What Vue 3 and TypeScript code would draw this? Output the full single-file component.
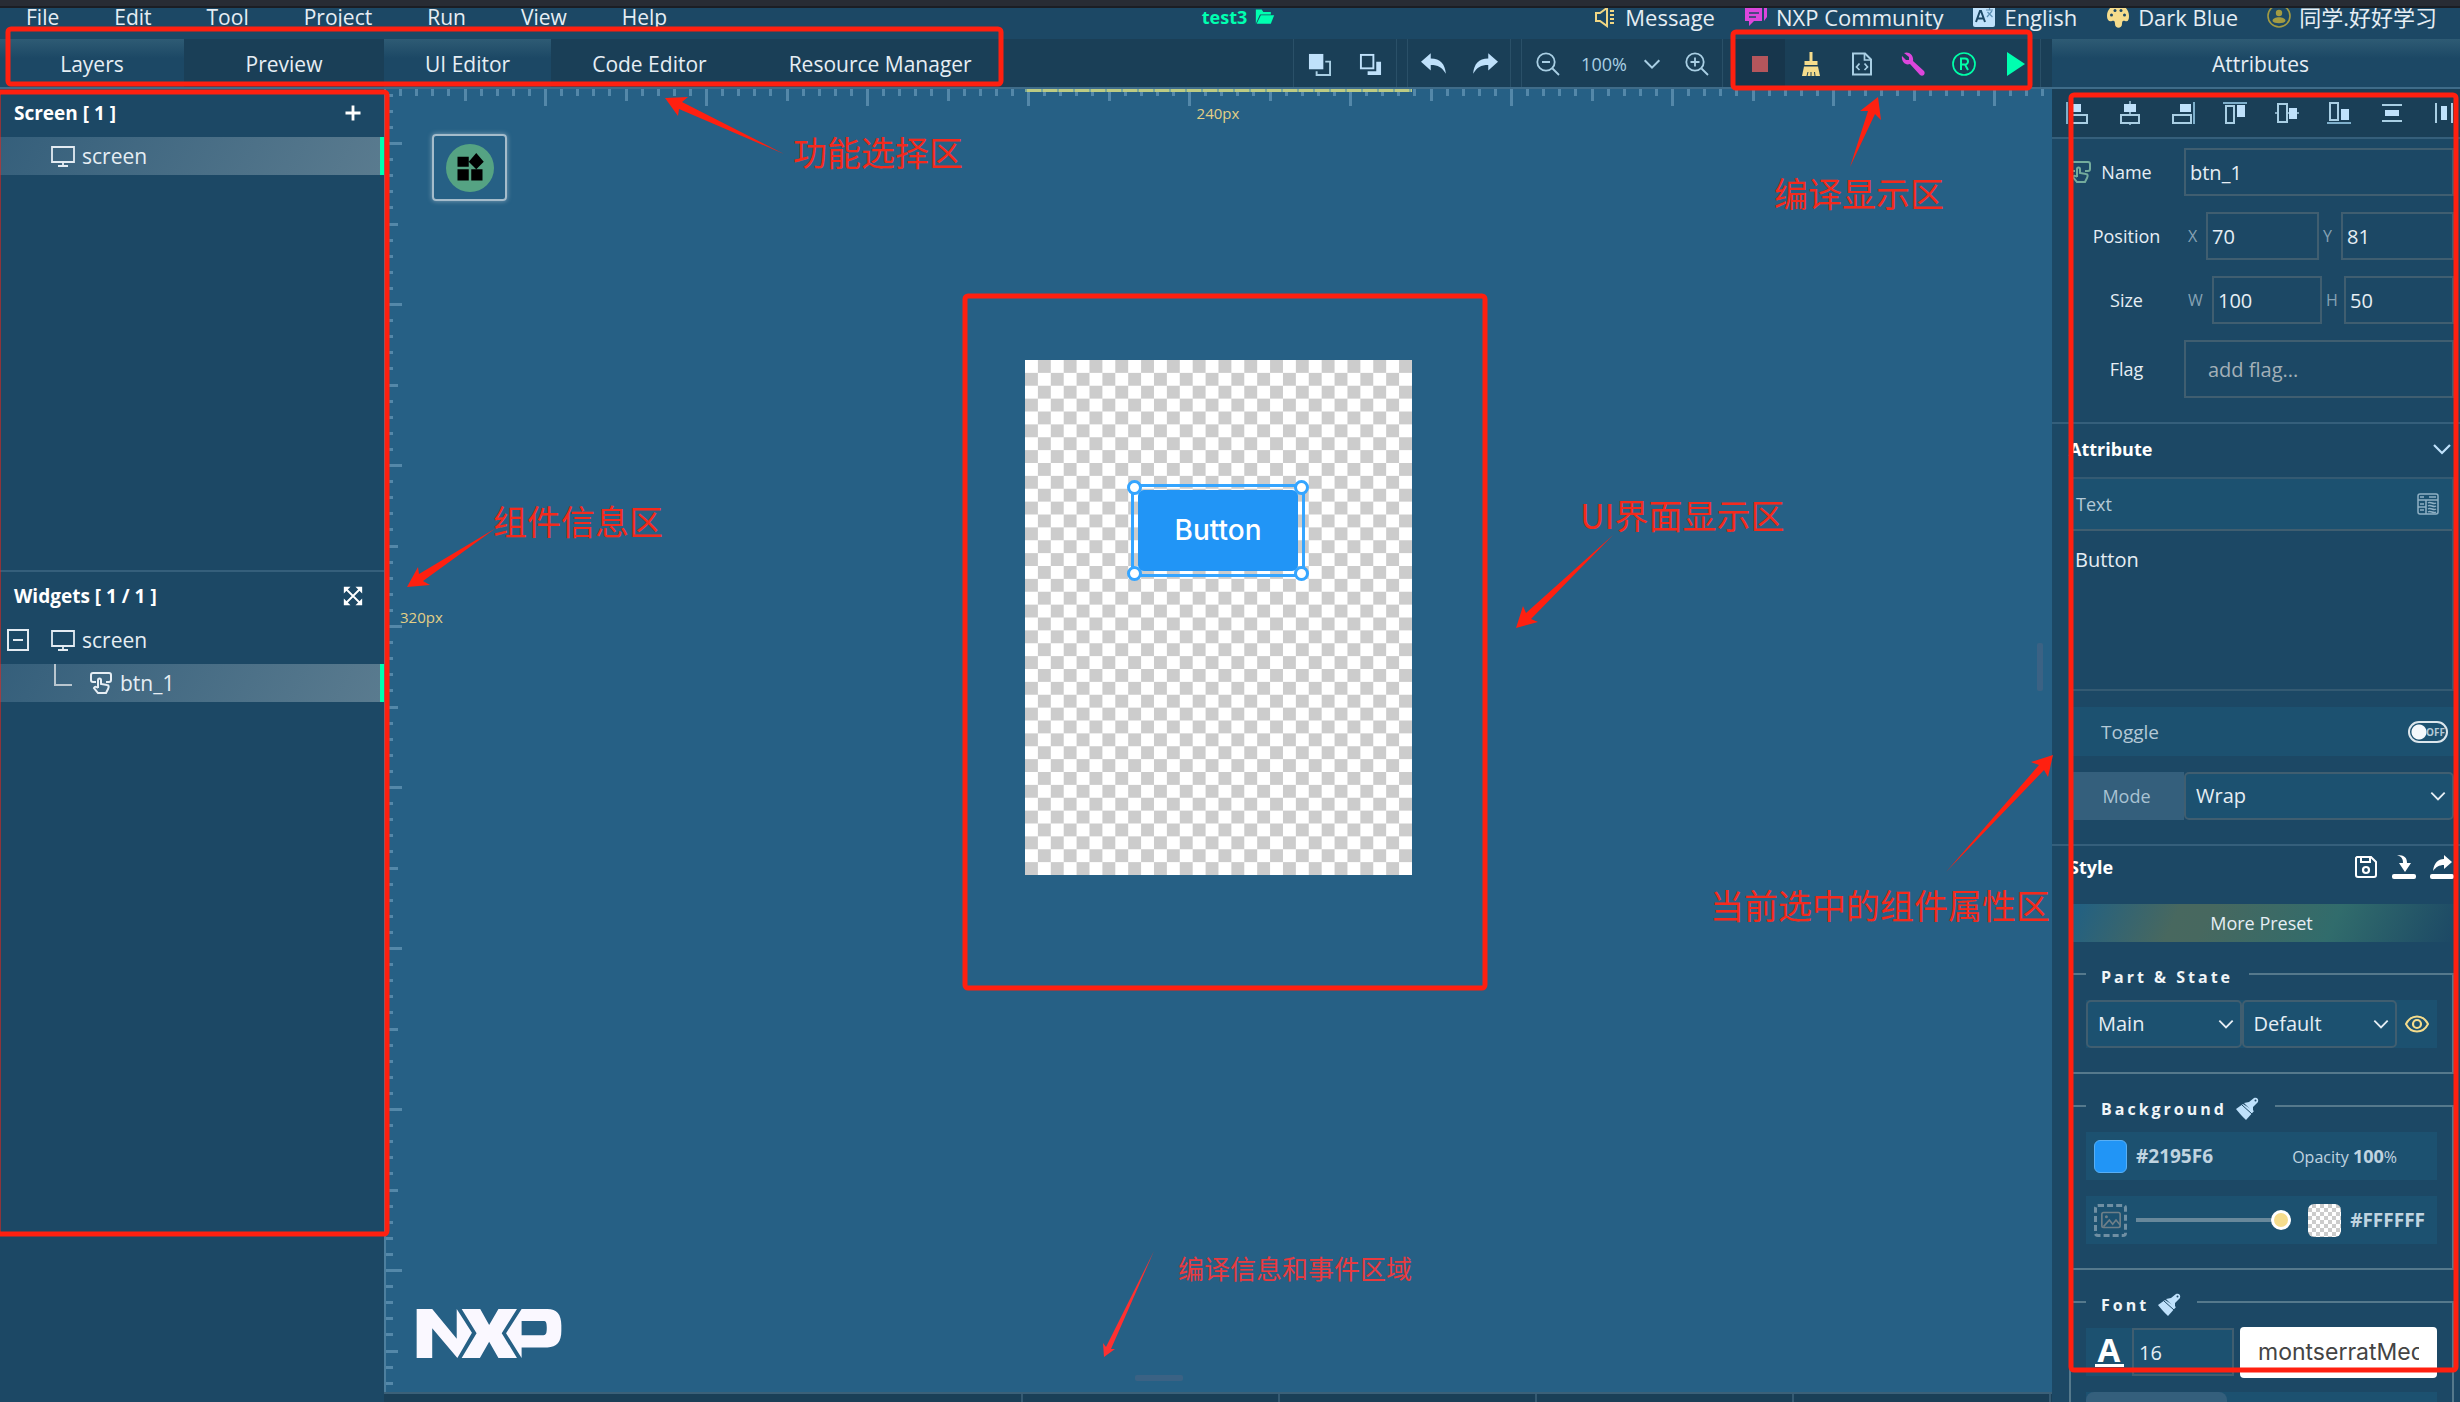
<script setup lang="ts">
import { h, ref } from 'vue'

const glyphs: Record<string, string> = {
  speaker: '<path d="M3 8h4l7-5v18l-7-5H3z" fill="none" stroke="#f0d684" stroke-width="2"/><path d="M17 6h4M17 10h4M17 14h4M17 18h4" stroke="#f0d684" stroke-width="2"/>',
  chat: '<path d="M1 3h17v13h-8l-5 5v-5H1z" fill="#dc46dc"/><path d="M20 2h3v10l-3 4z" fill="#dc46dc"/><path d="M5 8h10M5 12h7" stroke="#1c4865" stroke-width="1.6"/>',
  lang: '<rect x="1" y="1" width="22" height="21" rx="2" fill="#bfe1fb"/><path d="M4 17l4-11h1l4 11M5.500 13.500h6" fill="none" stroke="#1c4865" stroke-width="2"/><path d="M14 5h7M17.500 3v2M15 12l5-6M15.500 7l5 5" stroke="#5c90b4" stroke-width="1.200"/>',
  palette: '<path d="M12 0C5 0 1 5 1 11c0 4 2 6 5 5 2-1 3 0 3 3 0 5 7 5 7 0 0-3 1-4 3-3 3 1 4-1 4-5 0-6-4-11-11-11z" fill="#f5dc8c"/><circle cx="5.500" cy="10" r="1.500" fill="#1c4865"/><circle cx="9" cy="5.500" r="1.500" fill="#1c4865"/><circle cx="15" cy="5.500" r="1.500" fill="#1c4865"/><circle cx="18.500" cy="10" r="1.500" fill="#1c4865"/>',
  user: '<circle cx="12" cy="11" r="11" fill="none" stroke="#a39b42" stroke-width="1.600"/><circle cx="12" cy="8" r="3.200" fill="#a39b42"/><path d="M5.500 16c0-5 13-5 13 0-1 3-12 3-13 0z" fill="#a39b42"/>',
  folder: '<path d="M1 20V3h7l2 3h9v3H6z" fill="#00ffb0"/><path d="M7 10h16l-4 10H2z" fill="#00ffb0"/>',
  front: '<rect x="1" y="1" width="15" height="16" fill="#bfe1fb"/><path d="M18 9h5v14H9v-4" fill="none" stroke="#a9cfe4" stroke-width="2"/>',
  back: '<rect x="2" y="2" width="13" height="14" fill="none" stroke="#bfe1fb" stroke-width="2"/><path d="M18 9h5v14H9v-4h9z" fill="#bfe1fb"/>',
  undo: '<path d="M9 2v5c9 0 13 5 14 14-4-6-7-8-14-8v5L0 10z" fill="#bfe1fb"/>',
  redo: '<path d="M15 2v5C6 7 2 12 1 21c4-6 7-8 14-8v5l9-8z" fill="#bfe1fb"/>',
  zoomOut: '<circle cx="10" cy="10" r="8.700" fill="none" stroke="#a9cfe4" stroke-width="1.800"/><path d="M6 10h8M16.500 16.500L23 23" stroke="#a9cfe4" stroke-width="1.800"/>',
  zoomIn: '<circle cx="10" cy="10" r="8.700" fill="none" stroke="#a9cfe4" stroke-width="1.800"/><path d="M5.500 10h9M10 5.500v9M16.500 16.500L23 23" stroke="#a9cfe4" stroke-width="1.800"/>',
  chevron: '<path d="M4 8l8 8 8-8" fill="none" stroke="currentColor" stroke-width="2.200"/>',
  stop: '<rect x="4" y="4" width="16" height="16" fill="#b5565c"/>',
  broom: '<path d="M10.500 0h3v9h5v4h-13V9h5z" fill="#f5dc8c"/><path d="M5 14.500h14l2 9.500H3z" fill="#f5dc8c"/><path d="M8 24l1-4M12 24v-4M16 24l-.5-4" stroke="#1a3f57" stroke-width="1"/>',
  code: '<path d="M3 1.500h12l6 6v15H3z" fill="none" stroke="#a9cfe4" stroke-width="2"/><path d="M14.500 2v6H21M9.500 11.500L6.500 15l3 3M14.500 11.500l3 3.500-3 3" fill="none" stroke="#a9cfe4" stroke-width="1.700"/>',
  wrench: '<path d="M3 1l5 4v3H5L1 4c-1 5 3 10 8 8l10 11c3 2 6-1 4-4L12 9c1-6-4-10-9-8z" fill="#dc46dc"/>',
  registered: '<circle cx="12" cy="12" r="11" fill="none" stroke="#00ffa8" stroke-width="1.700"/><path d="M9 18V6.500h4a3 3 0 0 1 0 6H9M13 12.500l3 5.500" fill="none" stroke="#00ffa8" stroke-width="2"/>',
  play: '<path d="M4 0l18 12L4 24z" fill="#00ffb0"/>',
  plus: '<path d="M12 3v18M3 12h18" stroke="#fff" stroke-width="3.400"/>',
  expand: '<path d="M3 3l18 18M21 3L3 21" stroke="#fff" stroke-width="2.200"/><path d="M1 1h8L1 9zM23 1v8l-8-8zM1 23v-8l8 8zM23 23h-8l8-8z" fill="#fff"/>',
  monitor: '<path d="M1 3h22v15H1zM12 18v3M7 22h10" fill="none" stroke="#e3ebf2" stroke-width="1.800"/>',
  collapse: '<rect x="2" y="2" width="20" height="20" fill="none" stroke="#e3ebf2" stroke-width="2"/><path d="M7 12h10" stroke="#e3ebf2" stroke-width="2"/>',
  tap: '<path d="M7 11H4a2 2 0 0 1-2-2V4a2 2 0 0 1 2-2h16a2 2 0 0 1 2 2v5a2 2 0 0 1-2 2h-3" fill="none" stroke="currentColor" stroke-width="2"/><path d="M9 17V9c0-2 3-2 3 0v4l6 1c2 0 2 2 1 4l-2 4H9l-4-5c1-2 3-1 4 0" fill="none" stroke="currentColor" stroke-width="2"/>',
  left: '<path d="M1 1v22" stroke="#7fb0cc" stroke-width="2"/><rect x="4" y="3" width="11" height="8" fill="#bfe1fb"/><rect x="4" y="14" width="17" height="8" fill="none" stroke="#a9cfe4" stroke-width="2"/>',
  center: '<path d="M12 0v24" stroke="#a9cfe4" stroke-width="1.500"/><rect x="6" y="3" width="12" height="8" fill="#bfe1fb"/><rect x="3" y="14" width="18" height="8" fill="#1a3f57" stroke="#a9cfe4" stroke-width="2"/>',
  right: '<path d="M23 1v22" stroke="#7fb0cc" stroke-width="2"/><rect x="9" y="3" width="11" height="8" fill="#bfe1fb"/><rect x="2" y="14" width="18" height="8" fill="none" stroke="#a9cfe4" stroke-width="2"/>',
  top: '<path d="M0 2h24" stroke="#7fb0cc" stroke-width="2"/><rect x="14" y="4" width="8" height="12" fill="#bfe1fb"/><rect x="3" y="5" width="8" height="17" fill="none" stroke="#a9cfe4" stroke-width="2"/>',
  middle: '<path d="M0 12h24" stroke="#a9cfe4" stroke-width="1.500"/><rect x="14" y="7" width="8" height="11" fill="#bfe1fb"/><rect x="3" y="3" width="9" height="18" fill="#1a3f57" stroke="#a9cfe4" stroke-width="2"/>',
  bottom: '<path d="M0 22h24" stroke="#7fb0cc" stroke-width="2"/><rect x="14" y="8" width="8" height="11" fill="#bfe1fb"/><rect x="3" y="2" width="8" height="17" fill="none" stroke="#a9cfe4" stroke-width="2"/>',
  spreadV: '<path d="M2 4h20M2 20h20" stroke="#a9cfe4" stroke-width="2"/><rect x="5" y="9" width="14" height="6" fill="#bfe1fb"/>',
  spreadH: '<path d="M4 2v20M20 2v20" stroke="#a9cfe4" stroke-width="2"/><rect x="9" y="5" width="6" height="14" fill="#bfe1fb"/>',
  sheet: '<rect x="2" y="2" width="20" height="20" rx="2" fill="none" stroke="#8fb0c4" stroke-width="1.500"/><path d="M2 8h20M2 15h8M10 8v14M13 5h7M12 11c3-2 5 2 8 0M12 14c3-2 5 2 8 0M12 17c3-2 5 2 8 0M12 20c3-2 5 2 8 0M4 5h4M4 12h4M4 18h4" fill="none" stroke="#8fb0c4" stroke-width="1.500"/>',
  save: '<path d="M3 2h14l5 5v13a2 2 0 0 1-2 2H4a2 2 0 0 1-2-2V3z" fill="none" stroke="#fff" stroke-width="2"/><path d="M7 3v4h9V3" fill="none" stroke="#fff" stroke-width="2"/><circle cx="12" cy="15" r="3" fill="none" stroke="#fff" stroke-width="2.200"/>',
  import: '<path d="M5 0c8 0 10 3 10 8h4l-6 9-6-9h4c0-4-1-6-6-8z" fill="#fff"/><rect x="0" y="19" width="24" height="5" rx="2" fill="#fff"/>',
  export: '<path d="M3 16C4 8 8 4 14 4V0l8 7-8 7v-4c-5 0-8 2-11 6z" fill="#fff"/><rect x="0" y="19" width="24" height="5" rx="2" fill="#fff"/>',
  eye: '<path d="M1 12C6 2 18 2 23 12 18 22 6 22 1 12z" fill="none" stroke="#f5dc8c" stroke-width="2"/><circle cx="12" cy="12" r="4" fill="none" stroke="#f5dc8c" stroke-width="2.200"/>',
  brush: '<path d="M8 7L1 12c3 4 6 7 10 11l8-9z" fill="#bfe1fb"/><path d="M9 6l5-1 5-4c3-1 5 1 4 4l-5 5v5z" fill="#bfe1fb"/><path d="M7 8l10 9" stroke="#1c4865" stroke-width="1"/><circle cx="20.500" cy="3.500" r="1" fill="#1c4865"/>',
  picture: '<rect x="1" y="3" width="22" height="18" rx="2" fill="none" stroke="#6e7f88" stroke-width="2"/><circle cx="6.500" cy="8" r="1.800" fill="#6e7f88"/><path d="M3 20l7-8 4 5 4-5 5 6" fill="none" stroke="#6e7f88" stroke-width="2"/>',
  widgets: '<path d="M2 3h9v8H2zM2 13h9v9H2zM13 13h9v9h-9zM17 0l6 7-6 6-6-6z" fill="#000"/>',
}

const Glyph = (props: { name: string; size?: number }) =>
  h('svg', {
    viewBox: '0 0 24 24',
    width: props.size ?? 24,
    height: props.size ?? 24,
    'aria-hidden': 'true',
    innerHTML: glyphs[props.name],
  })
Glyph.props = ['name', 'size']

const menus = ['File', 'Edit', 'Tool', 'Project', 'Run', 'View', 'Help']
const account = [
  { icon: 'speaker', label: 'Message' },
  { icon: 'chat', label: 'NXP Community' },
  { icon: 'lang', label: 'English' },
  { icon: 'palette', label: 'Dark Blue' },
  { icon: 'user', label: '同学.好好学习' },
]
const editors = ['UI Editor', 'Code Editor', 'Resource Manager']
const buildTools = ['stop', 'broom', 'code', 'wrench', 'registered', 'play']
const aligns = ['left', 'center', 'right', 'top', 'middle', 'bottom', 'spreadV', 'spreadH']

const name = ref('btn_1')
const posX = ref('70')
const posY = ref('81')
const width = ref('100')
const height = ref('50')
const caption = ref('Button')
const toggle = ref(false)
const opacity = ref(100)
const fontSize = ref('16')
const fontName = ref('montserratMedium')

// Ruler: ten divisions to every 161 px, the fifth and tenth are longer
const ticks = (count: number, origin: number) =>
  Array.from({ length: count }, (_, i) => ({
    at: Math.round(origin + (i * 161) / 10),
    rank: i % 10 === 0 ? 'major' : i % 5 === 0 ? 'mid' : 'minor',
  }))
const tickLen = { major: 17, mid: 12, minor: 7 } as Record<string, number>
const across = ticks(104, -1)
const down = ticks(91, -108)

// Callout arrow: slim wedge that widens from its tail into a barbed head
function arrow(tx: number, ty: number, sx: number, sy: number, scale = 1) {
  const len = Math.hypot(sx - tx, sy - ty)
  const ux = (sx - tx) / len
  const uy = (sy - ty) / len
  const p = (a: number, b: number) =>
    `${Math.round(tx + (ux * a - uy * b) * scale)},${Math.round(ty + (uy * a + ux * b) * scale)}`
  return [p(0, 0), p(20, 11), p(17, 4), `${sx},${sy}`, p(17, -4), p(20, -11)].join(' ')
}
const arrows = [
  arrow(665, 98, 784, 154),
  arrow(407, 587, 496, 528),
  arrow(1878, 97, 1850, 167),
  arrow(1516, 628, 1613, 535),
  arrow(2053, 755, 1946, 872),
]
const smallArrow = arrow(1104, 1357, 1154, 1251, 0.6)
const frames = [
  { x: 8, y: 29, w: 993, h: 55 },
  { x: -2, y: 92, w: 389, h: 1142 },
  { x: 1733, y: 32, w: 297, h: 56 },
  { x: 2071, y: 95, w: 385, h: 1275 },
  { x: 965, y: 296, w: 520, h: 692 },
]
const notes = [
  { text: '功能选择区', x: 793, y: 127 },
  { text: '编译显示区', x: 1774, y: 168 },
  { text: '组件信息区', x: 493, y: 496 },
  { text: 'UI界面显示区', x: 1580, y: 490 },
  { text: '当前选中的组件属性区', x: 1710, y: 880 },
]
</script>

<template>
  <div class="app">
    <div class="titlebar"></div>
    <header class="menubar">
      <nav class="menus">
        <button v-for="m in menus" :key="m" type="button">{{ m }}</button>
      </nav>
      <button class="project" type="button">test3 <Glyph name="folder" :size="20" /></button>
      <div class="account">
        <button v-for="a in account" :key="a.label" type="button">
          <Glyph :name="a.icon" />{{ a.label }}
        </button>
      </div>
    </header>

    <div class="body">
      <aside class="left">
        <div class="head tabs">
          <button class="tab wide active" type="button">Layers</button>
          <button class="tab preview" type="button">Preview</button>
        </div>
        <section class="screens">
          <h2>Screen [ 1 ]<button type="button" aria-label="Add screen"><Glyph name="plus" :size="20" /></button></h2>
          <div class="row selected indent"><Glyph name="monitor" /><span>screen</span></div>
        </section>
        <section class="widgets">
          <h2>Widgets [ 1 / 1 ]<button type="button" aria-label="Expand"><Glyph name="expand" :size="20" /></button></h2>
          <div class="row root"><Glyph name="collapse" /><Glyph class="mon" name="monitor" /><span>screen</span></div>
          <div class="row selected child"><i class="branch"></i><Glyph name="tap" /><span>btn_1</span></div>
        </section>
      </aside>

      <main class="center">
        <div class="head tabs">
          <button v-for="(e, i) in editors" :key="e" type="button" class="tab" :class="{ active: i === 0 }">{{ e }}</button>
          <div class="tools">
            <div class="group">
              <button type="button" aria-label="Bring to front"><Glyph name="front" :size="23" /></button>
              <button type="button" aria-label="Send to back"><Glyph name="back" :size="23" /></button>
            </div>
            <div class="group">
              <button type="button" aria-label="Undo"><Glyph name="undo" :size="26" /></button>
              <button type="button" aria-label="Redo"><Glyph name="redo" :size="26" /></button>
            </div>
            <div class="group zoom">
              <button type="button" aria-label="Zoom out"><Glyph name="zoomOut" /></button>
              <button class="level" type="button">100%<Glyph name="chevron" :size="22" /></button>
              <button type="button" aria-label="Zoom in"><Glyph name="zoomIn" /></button>
            </div>
            <div class="group">
              <button v-for="b in buildTools" :key="b" type="button" :class="b" :aria-label="b"><Glyph :name="b" /></button>
            </div>
          </div>
        </div>

        <div class="stage">
          <svg class="ruler-x" aria-hidden="true">
            <rect v-for="t in across" :key="t.at" :x="t.at" y="0" width="3" :height="tickLen[t.rank]" />
          </svg>
          <svg class="ruler-y" aria-hidden="true">
            <rect v-for="t in down" :key="t.at" x="0" :y="t.at" :width="tickLen[t.rank]" height="3" />
          </svg>
          <div class="range"></div>
          <span class="px-x">240px</span>
          <span class="px-y">320px</span>
          <button class="palette" type="button" aria-label="Widgets"><span><Glyph name="widgets" :size="30" /></span></button>
          <div class="screen">
            <div class="selection">
              <div class="btn">Button</div>
              <i class="h nw"></i><i class="h ne"></i><i class="h sw"></i><i class="h se"></i>
            </div>
          </div>
          <svg class="logo" viewBox="49 57 437 148" width="146" height="49" role="img" aria-label="NXP">
            <g fill="#faf8ff">
              <path d="M49 57h47l74 90V57l46 72-44 76-76-90v90H49z" />
              <path d="M185 57h56l27 48 28-48h56l-46 73 46 75h-56l-28-49-28 49h-55l45-75z" />
              <path d="M366 57h78c28 0 42 16 42 50v16c0 34-14 50-42 50h-78v32l-47-75zM366 93v43h66c8 0 10-6 10-22s-2-21-10-21z" fill-rule="evenodd" />
            </g>
          </svg>
          <i class="grip-x"></i>
          <i class="grip-y"></i>
        </div>
        <footer class="dock"><i></i><i></i><i></i><i></i><i></i></footer>
      </main>

      <aside class="panel">
        <div class="head panel-title">Attributes</div>
        <div class="aligns">
          <button v-for="a in aligns" :key="a" type="button" :aria-label="a"><Glyph :name="a" /></button>
        </div>

        <section class="form">
          <div class="field">
            <Glyph class="kind" name="tap" />
            <label for="f-name">Name</label>
            <input id="f-name" v-model="name" />
          </div>
          <div class="field">
            <span class="label">Position</span>
            <label class="axis" for="f-x">X</label><input id="f-x" v-model="posX" />
            <label class="axis" for="f-y">Y</label><input id="f-y" v-model="posY" />
          </div>
          <div class="field">
            <span class="label">Size</span>
            <label class="axis w" for="f-w">W</label><input id="f-w" v-model="width" />
            <label class="axis" for="f-h">H</label><input id="f-h" v-model="height" />
          </div>
          <div class="field flag">
            <label for="f-flag">Flag</label>
            <input id="f-flag" placeholder="add flag..." />
          </div>
        </section>

        <section class="attribute">
          <h3>Attribute<Glyph name="chevron" /></h3>
          <div class="text-box">
            <label for="f-text">Text<Glyph name="sheet" /></label>
            <textarea id="f-text" v-model="caption"></textarea>
          </div>
          <label class="switch">Toggle<input v-model="toggle" type="checkbox" /><b>OFF</b></label>
          <div class="mode">
            <label for="f-mode">Mode</label>
            <div class="pick">
              <select id="f-mode"><option>Wrap</option></select><Glyph name="chevron" :size="20" />
            </div>
          </div>
        </section>

        <section class="style">
          <h3>Style
            <span>
              <button type="button" aria-label="Save"><Glyph name="save" /></button>
              <button type="button" aria-label="Import"><Glyph name="import" /></button>
              <button type="button" aria-label="Export"><Glyph name="export" /></button>
            </span>
          </h3>
          <button class="preset" type="button">More Preset</button>

          <fieldset>
            <legend>Part &amp; State</legend>
            <div class="line">
              <div class="pick"><select aria-label="Part"><option>Main</option></select><Glyph name="chevron" :size="20" /></div>
              <div class="pick"><select aria-label="State"><option>Default</option></select><Glyph name="chevron" :size="20" /></div>
              <button class="eye" type="button" aria-label="Show"><Glyph name="eye" /></button>
            </div>
          </fieldset>

          <fieldset>
            <legend>Background <Glyph name="brush" /></legend>
            <div class="line pad">
              <i class="swatch blue"></i><b>#2195F6</b>
              <span class="opacity">Opacity <b>100</b>%</span>
            </div>
            <div class="line pad">
              <span class="slot"><Glyph name="picture" :size="20" /></span>
              <input v-model="opacity" type="range" min="0" max="100" aria-label="Opacity" />
              <i class="swatch clear"></i><b>#FFFFFF</b>
            </div>
          </fieldset>

          <fieldset>
            <legend>Font <Glyph name="brush" /></legend>
            <div class="line font">
              <button class="colour" type="button"><span>A</span></button>
              <input v-model="fontSize" class="size" aria-label="Font size" />
              <input v-model="fontName" class="family" aria-label="Font family" />
            </div>
            <div class="line more"><i></i></div>
          </fieldset>
        </section>
      </aside>
    </div>

    <div class="callouts">
      <svg width="100%" height="100%" aria-hidden="true">
        <rect v-for="(f, i) in frames" :key="i" :x="f.x" :y="f.y" :width="f.w" :height="f.h" rx="3" fill="none" stroke="#ff2010" stroke-width="5" />
        <polygon v-for="a in arrows" :key="a" :points="a" fill="#ff2010" />
        <polygon :points="smallArrow" fill="#ff3030" />
      </svg>
      <span v-for="n in notes" :key="n.text" :style="{ left: n.x + 'px', top: n.y + 'px' }">{{ n.text }}</span>
      <span class="small">编译信息和事件区域</span>
    </div>
  </div>
</template>

<style>
body {
  margin: 0;
  background: #1c4865;
}
</style>

<style scoped>
* {
  box-sizing: border-box;
}
.app {
  position: relative;
  display: flex;
  flex-direction: column;
  height: 100vh;
  overflow: hidden;
  background: #1c4865;
  color: #e6eef4;
  font-family: "Open Sans", "Noto Sans CJK SC", sans-serif;
  font-size: 20px;
  line-height: 28px;
}
button,
input,
select,
textarea {
  margin: 0;
  padding: 0;
  border: 0;
  border-radius: 0;
  background: none;
  color: inherit;
  font: inherit;
  outline: 0;
}
svg {
  flex: none;
  display: block;
}
.titlebar {
  position: relative;
  z-index: 1;
  flex: none;
  height: 8px;
  background: #282c34;
  border-bottom: 2px solid #1b1e24;
}
.menubar {
  flex: none;
  display: flex;
  align-items: center;
  justify-content: space-between;
  height: 31px;
  padding: 0 23px 14px 26px;
  font-size: 21px;
  line-height: 18px;
}
.menubar button {
  height: 18px;
}
.menus {
  display: flex;
  flex: 1 1 0;
  gap: 55px;
}
.project {
  display: flex;
  align-items: center;
  gap: 8px;
  margin-left: 14px;
  color: #00ffb0;
  font-size: 18px;
  font-weight: 700;
}
.account {
  display: flex;
  flex: 1 1 0;
  justify-content: flex-end;
  gap: 29px;
  font-size: 22px;
}
.account button {
  display: flex;
  align-items: center;
  gap: 8px;
  white-space: nowrap;
}
.body {
  flex: 1;
  display: flex;
  min-height: 0;
}
.head {
  flex: none;
  height: 50px;
  border-bottom: 2px solid #3f6c89;
  background: #1a3f57;
  font-size: 21px;
}
.tabs {
  display: flex;
}
.tab {
  padding: 2px 41px 0;
  white-space: nowrap;
}
.tab.active {
  background: linear-gradient(#2e5b74, #1c4865 40%);
}
.wide {
  flex: 0 0 184px;
}
.preview {
  flex: 1;
}

.left {
  flex: 0 0 384px;
  display: flex;
  flex-direction: column;
}
h2,
h3 {
  display: flex;
  align-items: center;
  justify-content: space-between;
  margin: 0;
  font-size: 18px;
  font-weight: 700;
  color: #fff;
}
h2 {
  height: 48px;
  padding: 0 21px 0 14px;
  font-size: 19px;
}
.screens {
  flex: 0 0 483px;
  border-bottom: 2px solid #355f7b;
}
.row {
  display: flex;
  align-items: center;
  gap: 7px;
  height: 38px;
  font-size: 21px;
}
.selected {
  border-right: 4px solid #00ffb0;
  background: linear-gradient(120deg, #355f7b, #5a7b8f);
}
.indent {
  padding-left: 51px;
}
.root {
  height: 44px;
  padding: 0 0 4px 6px;
}
.mon {
  margin-left: 14px;
}
.child {
  padding-left: 54px;
}
.branch {
  align-self: flex-start;
  width: 18px;
  height: 22px;
  margin-right: 10px;
  border: solid #b9c6cf;
  border-width: 0 0 2px 2px;
}

.center {
  flex: 1;
  display: flex;
  flex-direction: column;
  min-width: 0;
}
.tools {
  display: flex;
  gap: 10px;
  margin-left: auto;
  padding-right: 11px;
}
.group {
  display: flex;
  align-items: stretch;
  border: solid #2a5068;
  border-width: 0 1px;
}
.group button {
  display: flex;
  align-items: center;
  justify-content: center;
  width: 51px;
  padding-top: 2px;
  color: #a9cfe4;
}
.group .level {
  width: 98px;
  gap: 14px;
  font-size: 18px;
}
.group .stop {
  background: #17364c;
}
.stage {
  position: relative;
  flex: 1;
  display: flex;
  justify-content: center;
  align-items: flex-start;
  padding-top: 271px;
  background: #266085;
  overflow: hidden;
}
.ruler-x,
.ruler-y {
  position: absolute;
  left: 0;
  top: 0;
  fill: #5488a9;
}
.ruler-x {
  width: 100%;
  height: 17px;
}
.ruler-y {
  width: 18px;
  height: 100%;
  border-left: 2px solid #4d7f9e;
}
.range {
  position: absolute;
  top: 0;
  left: calc(50% - 193px);
  width: 387px;
  height: 3px;
  background: repeating-linear-gradient(90deg, #7ea994 0 2px, #bccb83 2px 16px);
}
.px-x,
.px-y {
  position: absolute;
  color: #e3cf85;
  font-size: 15px;
  line-height: 20px;
}
.px-x {
  top: 14px;
  left: 50%;
  transform: translateX(-50%);
}
.px-y {
  top: 518px;
  left: 16px;
}
.palette {
  position: absolute;
  left: 48px;
  top: 45px;
  display: flex;
  align-items: center;
  justify-content: center;
  width: 75px;
  height: 67px;
  border: 2px solid #a5bccb;
  border-radius: 4px;
  box-shadow: 0 0 5px #7fa0b6;
}
.palette span {
  display: flex;
  align-items: center;
  justify-content: center;
  width: 48px;
  height: 48px;
  border-radius: 50%;
  background: #55a383;
}
.screen {
  display: flex;
  align-items: flex-start;
  justify-content: center;
  width: 387px;
  height: 515px;
  padding-top: 124px;
  background: conic-gradient(#ccc 25%, #fff 0 50%, #ccc 0 75%, #fff 0) 0 0 / calc(100% / 15) calc(100% / 20);
}
.selection {
  position: relative;
  width: 174px;
  height: 93px;
  padding: 3px 4px;
  border: 3px solid #35a5ff;
}
.btn {
  height: 81px;
  border-radius: 6px;
  background: #2195f6;
  color: #fff;
  font-family: Inter, sans-serif;
  font-size: 28px;
  font-weight: 500;
  line-height: 81px;
  text-align: center;
}
.h {
  position: absolute;
  width: 15px;
  height: 15px;
  border: 3px solid #35a5ff;
  border-radius: 50%;
  background: #fff;
}
.nw {
  left: -7px;
  top: -7px;
}
.ne {
  right: -7px;
  top: -7px;
}
.sw {
  left: -7px;
  bottom: -7px;
}
.se {
  right: -7px;
  bottom: -7px;
}
.logo {
  position: absolute;
  left: 32px;
  bottom: 34px;
}
.grip-x,
.grip-y {
  position: absolute;
  border-radius: 2px;
  background: #3b6284;
}
.grip-x {
  bottom: 11px;
  left: 45%;
  width: 48px;
  height: 6px;
}
.grip-y {
  top: 554px;
  right: 9px;
  width: 6px;
  height: 48px;
}
.dock {
  flex: none;
  display: flex;
  height: 10px;
  padding-left: 382px;
  border-top: 2px solid #3b6078;
  background: #1a3f57;
}
.dock i {
  width: 257px;
  border-right: 2px solid #355a72;
}

.panel {
  flex: 0 0 408px;
  overflow: hidden;
}
.panel-title {
  padding-left: 9px;
  background: linear-gradient(#2e5b74, #1c4865 40%);
  line-height: 50px;
  text-align: center;
}
.aligns {
  display: flex;
  justify-content: space-between;
  align-items: center;
  height: 50px;
  padding: 0 4px 0 14px;
  border-bottom: 2px solid #355f7b;
  background: #1a3f57;
}
.form {
  display: flex;
  flex-direction: column;
  gap: 16px;
  padding: 9px 6px 24px 17px;
  border-bottom: 2px solid #355f7b;
}
.field {
  position: relative;
  display: flex;
  align-items: center;
}
.field > label,
.label {
  flex: 0 0 115px;
  font-size: 18px;
  text-align: center;
}
.kind {
  position: absolute;
  left: -1px;
  color: #73ab9c;
}
.field .axis {
  flex: 0 0 22px;
  padding-left: 4px;
  color: #86a2b4;
  font-size: 16px;
  text-align: left;
}
.field .axis.w {
  flex-basis: 28px;
}
.field input {
  flex: 1 1 0;
  min-width: 0;
  height: 48px;
  padding: 0 4px;
  border: 2px solid #405e70;
}
.field.flag input {
  height: 58px;
  padding: 0 22px;
}
.flag input::placeholder {
  color: #a3b0b8;
  opacity: 1;
}
h3 {
  height: 48px;
}
.attribute {
  padding: 1px 6px 24px 17px;
  border-bottom: 2px solid #355f7b;
}
.attribute h3 {
  margin-bottom: 4px;
}
.attribute h3 svg {
  color: #bfe1fb;
}
.text-box {
  border: 2px solid #345a72;
}
.text-box label {
  display: flex;
  align-items: center;
  justify-content: space-between;
  height: 52px;
  padding: 0 12px 0 5px;
  border-bottom: 2px solid #405e70;
  background: #1c5170;
  color: #b4c9d6;
  font-size: 18px;
}
.text-box textarea {
  display: block;
  width: 100%;
  height: 158px;
  padding: 15px 4px;
  resize: none;
}
.switch {
  position: relative;
  display: flex;
  align-items: center;
  justify-content: space-between;
  height: 49px;
  margin: 16px 0;
  padding: 0 6px 0 32px;
  background: #1c5170;
  color: #b4c9d6;
  font-size: 19px;
}
.switch input {
  appearance: none;
  width: 40px;
  height: 22px;
  border: 2px solid #dce6ec;
  border-radius: 11px;
  background: radial-gradient(circle at 9px 9px, #f4f8fb 0 7px, transparent 8px);
}
.switch b {
  position: absolute;
  right: 9px;
  font-size: 10px;
  line-height: 12px;
}
.mode {
  display: flex;
}
.mode label {
  flex: 0 0 115px;
  background: #345f7c;
  color: #a9c3d3;
  font-size: 18px;
  line-height: 48px;
  text-align: center;
}
.pick {
  position: relative;
  flex: 1 1 0;
  min-width: 0;
}
.pick select {
  appearance: none;
  width: 100%;
  height: 48px;
  padding: 0 10px;
  border: 2px solid #405e70;
  border-radius: 5px;
  background: #1c5170;
}
.pick svg {
  position: absolute;
  right: 6px;
  top: 14px;
  pointer-events: none;
}
.style {
  padding: 0 6px 0 17px;
}
.style h3 {
  height: 42px;
}
.style h3 span {
  display: flex;
  gap: 14px;
}
.preset {
  display: block;
  width: 100%;
  height: 38px;
  margin: 16px 0 20px;
  background: linear-gradient(115deg, #1f6085, #48685f 28%, #47685f 36%, #316c6c 68%, #1c4865);
  font-size: 18px;
}
fieldset {
  min-width: 0;
  margin: 0 0 20px;
  padding: 14px 15px 24px;
  border: 2px solid #55798c;
  display: block;
}
legend {
  display: flex;
  align-items: center;
  gap: 8px;
  height: 24px;
  padding: 6px 16px 0 15px;
  color: #f0f5f8;
  font-size: 16px;
  font-weight: 700;
  letter-spacing: 3px;
  line-height: 18px;
}
.line {
  display: flex;
  align-items: center;
  height: 48px;
  background: #1c5170;
}
.line + .line {
  margin-top: 16px;
}
.eye {
  display: flex;
  justify-content: center;
  width: 40px;
}
.pad {
  gap: 9px;
  padding: 0 12px 0 8px;
  color: #c0d4e0;
  font-size: 19px;
}
.swatch {
  flex: none;
  width: 33px;
  height: 33px;
  border-radius: 6px;
}
.blue {
  border: 1px solid #58aff5;
  background: #2195f6;
}
.clear {
  margin-left: 8px;
  background: conic-gradient(#ccc 25%, #fff 0 50%, #ccc 0 75%, #fff 0) 0 0 / 8px 8px;
}
.opacity {
  margin-left: auto;
  margin-right: 28px;
  font-size: 16px;
}
.opacity b {
  font-size: 18px;
}
.slot {
  flex: none;
  display: flex;
  align-items: center;
  justify-content: center;
  width: 33px;
  height: 33px;
  border: 3px dashed #6f8fa3;
  border-radius: 4px;
}
.pad input {
  appearance: none;
  flex: 1 1 0;
  min-width: 0;
  height: 20px;
  background: linear-gradient(#68889b, #68889b) center / 100% 4px no-repeat;
}
.pad input::-webkit-slider-thumb {
  appearance: none;
  width: 20px;
  height: 20px;
  border: 3px solid #fff;
  border-radius: 50%;
  background: #f5dc8c;
}
.font {
  background: #1c4865;
}
.colour {
  display: flex;
  align-items: flex-start;
  justify-content: center;
  flex: 0 0 46px;
  height: 48px;
  padding-top: 8px;
  background: #1c5170;
  color: #fff;
  font-size: 33px;
  font-weight: 700;
  line-height: 28px;
}
.colour span {
  width: 29px;
  border-bottom: 3px solid #fff;
}
.size {
  flex: 0 0 102px;
  width: 102px;
  height: 48px;
  padding: 0 5px;
  border: 2px solid #405e70;
  background: #1c5170;
}
.family {
  flex: 1 1 0;
  min-width: 0;
  height: 51px;
  margin-left: 6px;
  padding: 0 18px;
  border-radius: 4px;
  background: #fff;
  color: #444;
  font-family: Inter, sans-serif;
  font-size: 23px;
}
.more i {
  width: 141px;
  height: 48px;
  border-radius: 8px 8px 0 0;
  background: #345f7c;
}

.callouts {
  position: absolute;
  inset: 0;
  z-index: 2;
  pointer-events: none;
  color: #f42a1c;
  font-family: "Noto Sans CJK SC", sans-serif;
  font-size: 34px;
  line-height: 50px;
}
.callouts span {
  position: absolute;
  white-space: nowrap;
}
.callouts .small {
  left: 1178px;
  top: 1243px;
  color: #e83a3f;
  font-size: 26px;
}
</style>
